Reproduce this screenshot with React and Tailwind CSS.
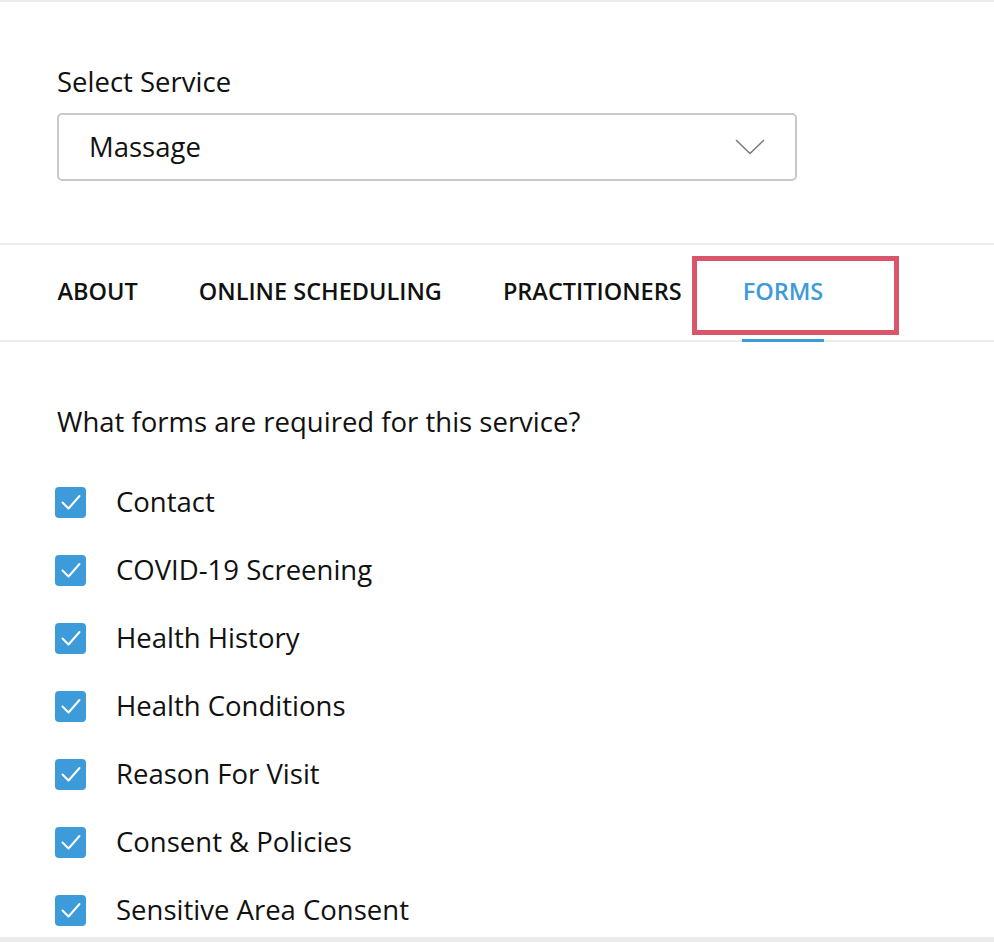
import { useState } from "react";

const FORMS = [
  "Contact",
  "COVID-19 Screening",
  "Health History",
  "Health Conditions",
  "Reason For Visit",
  "Consent & Policies",
  "Sensitive Area Consent",
];

const TABS = ["ABOUT", "ONLINE SCHEDULING", "PRACTITIONERS", "FORMS"];

function Check() {
  return (
    <span className="flex h-[31px] w-[31px] shrink-0 items-center justify-center rounded-[4px] bg-[#3d9bd9]">
      <svg width="22" height="22" viewBox="0 0 22 22" fill="none">
        <path d="M2.5 11.5 L8.5 17.5 L19.5 5" stroke="white" strokeWidth="2" strokeLinecap="round" strokeLinejoin="round" />
      </svg>
    </span>
  );
}

export default function App() {
  const [tab] = useState("FORMS");
  const [checked, setChecked] = useState(() => FORMS.map(() => true));

  return (
    <div className="h-[942px] w-[994px] overflow-hidden bg-white text-[#111] border-t-2 border-b-[5px] border-[#ececec]" style={{ fontFamily: "'Open Sans', sans-serif" }}>
      {/* service picker */}
      <div className="px-[57px] pt-[63px] pb-[62px]">
        <div className="text-[27.5px] leading-[34px]">Select Service</div>
        <div className="mt-[14px] flex h-[68px] w-[740px] items-center justify-between rounded-[5px] border-2 border-[#c9c9c9] pl-[30px] pr-[30px]">
          <span className="text-[27.5px]">Massage</span>
          <svg width="30" height="16" viewBox="0 0 30 16" fill="none">
            <path d="M1 1 L15 14.5 L29 1" stroke="#777" strokeWidth="1.4" />
          </svg>
        </div>
      </div>

      {/* tabs */}
      <div className="flex h-[99px] border-y-2 border-[#ececec] pl-[27px] pb-[2px]">
        {TABS.map((t) => (
          <div key={t} className="relative flex items-center px-[30.5px]">
            <span className={`text-[23.5px] font-semibold ${t === tab ? "text-[#3d9bd9]" : "text-[#111]"}`}>{t}</span>
            {t === tab && (
              <>
                <span className="absolute bottom-[-4px] left-[30px] right-[30px] h-[3px] bg-[#3d9bd9]" />
                <span className="absolute left-[-20px] top-[11px] h-[79px] w-[207px] border-[5px] border-[#d9566a]" />
              </>
            )}
          </div>
        ))}
      </div>

      {/* forms */}
      <div className="px-[57px] pt-[63px]">
        <div className="text-[27.5px] leading-[34px]">What forms are required for this service?</div>
        <div className="mt-[29px] flex flex-col">
          {FORMS.map((f, i) => (
            <label
              key={f}
              className="flex h-[68px] shrink-0 cursor-pointer items-center gap-[30px]"
              onClick={() => setChecked((c) => c.map((v, j) => (j === i ? !v : v)))}
            >
              <span className="-ml-[2px]">{checked[i] ? <Check /> : <span className="block h-[31px] w-[31px] rounded-[4px] border-2 border-[#bbb]" />}</span>
              <span className="text-[27.5px]">{f}</span>
            </label>
          ))}
        </div>
      </div>
    </div>
  );
}
